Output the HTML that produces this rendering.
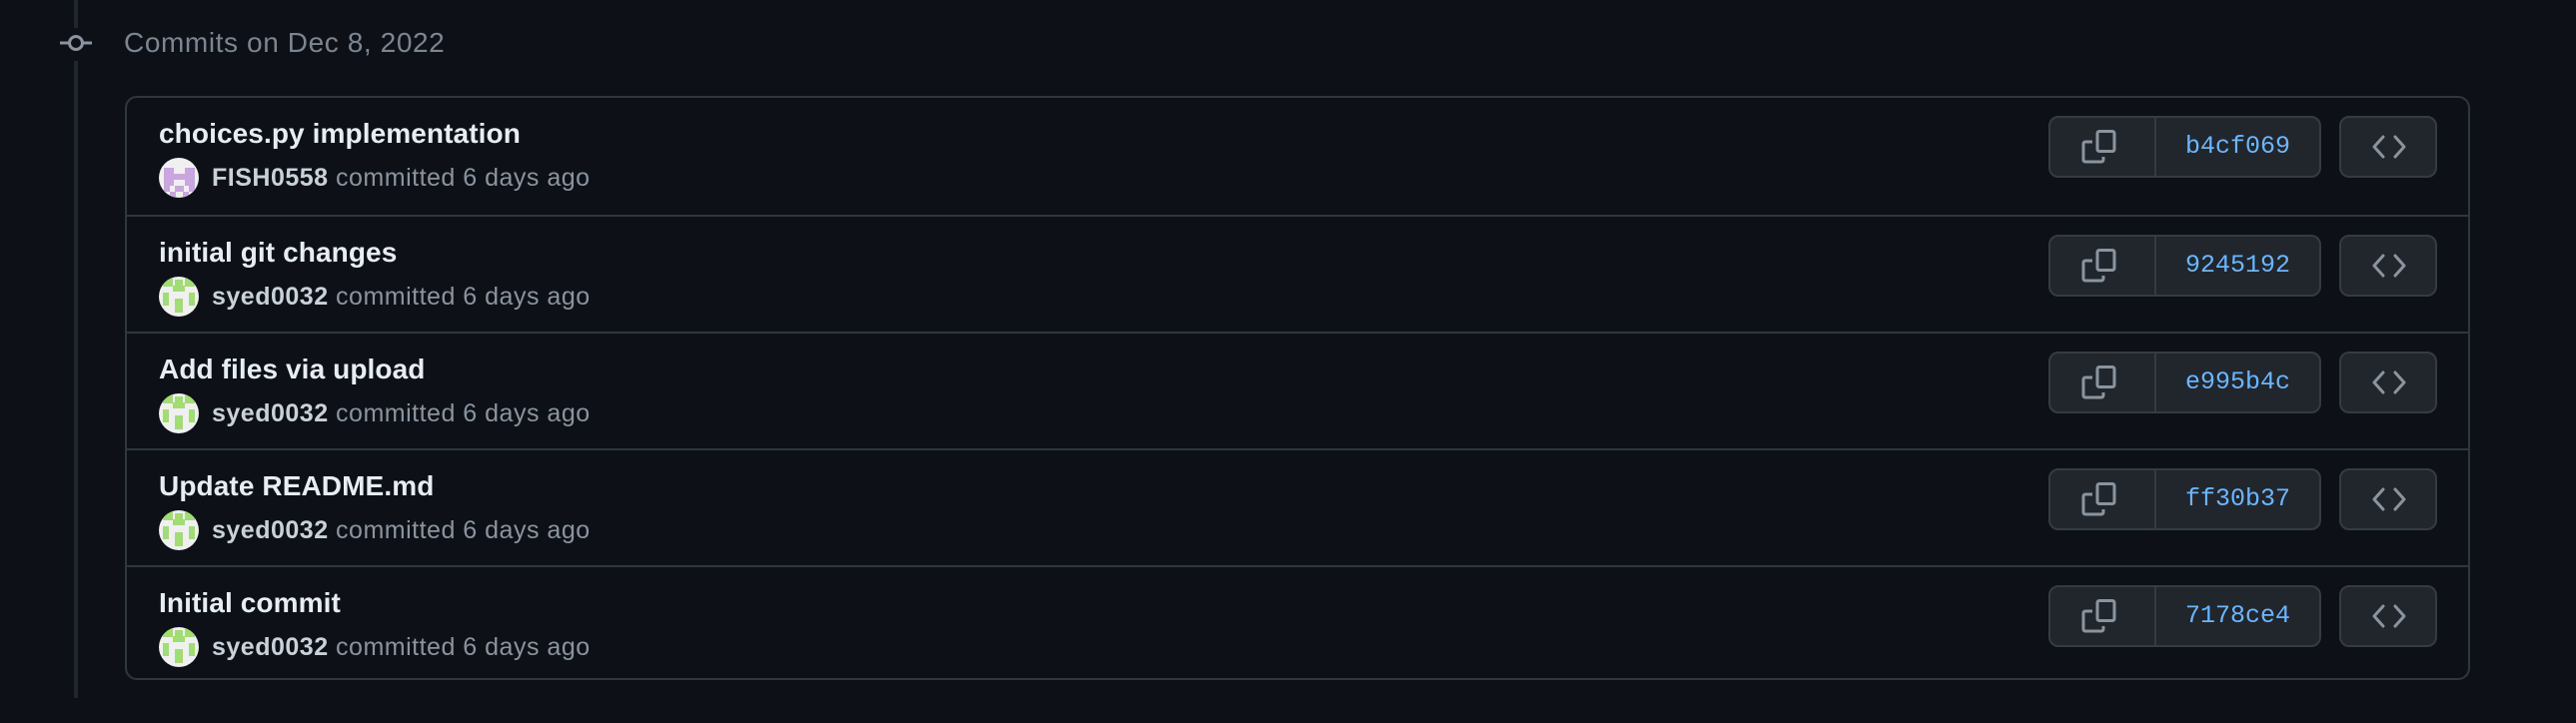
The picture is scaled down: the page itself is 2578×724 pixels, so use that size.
<!DOCTYPE html>
<html><head><meta charset="utf-8"><style>
html,body{margin:0;padding:0;background:#0d1117;width:2578px;height:724px;overflow:hidden;font-family:"Liberation Sans",sans-serif;}
.tl{position:absolute;left:74px;width:4px;background:#21262d;}
.hdr{position:absolute;left:124px;top:24px;font-size:28px;letter-spacing:0.6px;color:#7d8590;line-height:38px;}
.box{position:absolute;left:125px;top:96px;width:2347px;height:585px;border:2px solid #30363d;border-radius:12px;box-sizing:border-box;}
.row{position:absolute;left:0;width:100%;height:117px;border-top:2px solid #30363d;box-sizing:border-box;}
.row.first{border-top:none;}
.title{position:absolute;left:32px;top:19px;font-size:28px;font-weight:bold;color:#e6edf3;line-height:34px;letter-spacing:0.1px;}
.av{position:absolute;left:32px;top:60px;width:40px;height:40px;}
.meta{position:absolute;left:85px;top:64px;font-size:25px;letter-spacing:0.5px;color:#8b949e;line-height:32px;}
.meta b{color:#c9d1d9;}
.grp{position:absolute;left:1923px;top:18px;width:273px;height:62px;border:2px solid #363b42;background:#21262d;border-radius:10px;box-sizing:border-box;}
.grp .div{position:absolute;left:104px;top:0;bottom:0;width:2px;background:#363b42;}
.grp .hash{position:absolute;left:106px;right:0;top:0;bottom:0;text-align:center;line-height:58px;font-family:"Liberation Mono",monospace;font-size:25px;color:#6cb6ff;}
.grp svg{position:absolute;left:30px;top:12px;}
.code{position:absolute;left:2214px;top:18px;width:98px;height:62px;border:2px solid #363b42;background:#21262d;border-radius:10px;box-sizing:border-box;}
.code svg{position:absolute;left:30px;top:16px;}
</style></head><body>
<div class="tl" style="top:0;height:28px"></div>
<div class="tl" style="top:61px;height:638px"></div>
<svg style="position:absolute;left:56px;top:27px" width="40" height="32"><line x1="4" y1="16" x2="13" y2="16" stroke="#8b949e" stroke-width="3"/><line x1="27" y1="16" x2="36" y2="16" stroke="#8b949e" stroke-width="3"/><circle cx="20" cy="16" r="6.5" fill="none" stroke="#8b949e" stroke-width="3"/></svg>
<div class="hdr">Commits on Dec 8, 2022</div>
<div class="box">

<div class="row first" style="top:0">
<div class="title">choices.py implementation</div>
<svg class="av" viewBox="0 0 40 40"><defs><clipPath id="c1"><circle cx="20" cy="20" r="20"/></clipPath></defs><g clip-path="url(#c1)"><rect width="40" height="40" fill="#f0f0f0"/><g fill="#c9a6df"><rect x="5" y="10" width="10" height="6"/><rect x="26" y="10" width="10" height="6"/><rect x="5" y="16" width="31" height="6"/><rect x="5" y="22" width="10" height="6"/><rect x="26" y="22" width="10" height="6"/><rect x="5" y="28" width="6" height="6"/><rect x="16" y="28" width="9" height="6"/><rect x="30" y="28" width="6" height="6"/><rect x="11" y="34" width="6" height="6"/><rect x="24" y="34" width="6" height="6"/></g></g></svg>
<div class="meta"><b>FISH0558</b> committed 6 days ago</div>
<div class="grp"><svg width="36" height="36" viewBox="0 0 36 36"><path d="M19 1.5h13a2 2 0 0 1 2 2v16a2 2 0 0 1-2 2H19a2 2 0 0 1-2-2v-16a2 2 0 0 1 2-2z" fill="none" stroke="#8b949e" stroke-width="3"/><path d="M12 12H5a2 2 0 0 0-2 2v16a2 2 0 0 0 2 2h16a2 2 0 0 0 2-2v-3" fill="none" stroke="#8b949e" stroke-width="3"/></svg><div class="div"></div><div class="hash">b4cf069</div></div>
<div class="code"><svg width="36" height="26" viewBox="0 0 36 26"><path d="M12 3L3 13l9 10M24 3l9 10-9 10" fill="none" stroke="#8b949e" stroke-width="3" stroke-linecap="round" stroke-linejoin="round"/></svg></div>
</div>

<div class="row" style="top:117px">
<div class="title">initial git changes</div>
<svg class="av" viewBox="0 0 40 40"><use href="#g"/></svg>
<div class="meta"><b>syed0032</b> committed 6 days ago</div>
<div class="grp"><svg width="36" height="36" viewBox="0 0 36 36"><path d="M19 1.5h13a2 2 0 0 1 2 2v16a2 2 0 0 1-2 2H19a2 2 0 0 1-2-2v-16a2 2 0 0 1 2-2z" fill="none" stroke="#8b949e" stroke-width="3"/><path d="M12 12H5a2 2 0 0 0-2 2v16a2 2 0 0 0 2 2h16a2 2 0 0 0 2-2v-3" fill="none" stroke="#8b949e" stroke-width="3"/></svg><div class="div"></div><div class="hash">9245192</div></div>
<div class="code"><svg width="36" height="26" viewBox="0 0 36 26"><path d="M12 3L3 13l9 10M24 3l9 10-9 10" fill="none" stroke="#8b949e" stroke-width="3" stroke-linecap="round" stroke-linejoin="round"/></svg></div>
</div>

<div class="row" style="top:234px">
<div class="title">Add files via upload</div>
<svg class="av" viewBox="0 0 40 40"><use href="#g"/></svg>
<div class="meta"><b>syed0032</b> committed 6 days ago</div>
<div class="grp"><svg width="36" height="36" viewBox="0 0 36 36"><path d="M19 1.5h13a2 2 0 0 1 2 2v16a2 2 0 0 1-2 2H19a2 2 0 0 1-2-2v-16a2 2 0 0 1 2-2z" fill="none" stroke="#8b949e" stroke-width="3"/><path d="M12 12H5a2 2 0 0 0-2 2v16a2 2 0 0 0 2 2h16a2 2 0 0 0 2-2v-3" fill="none" stroke="#8b949e" stroke-width="3"/></svg><div class="div"></div><div class="hash">e995b4c</div></div>
<div class="code"><svg width="36" height="26" viewBox="0 0 36 26"><path d="M12 3L3 13l9 10M24 3l9 10-9 10" fill="none" stroke="#8b949e" stroke-width="3" stroke-linecap="round" stroke-linejoin="round"/></svg></div>
</div>

<div class="row" style="top:351px">
<div class="title">Update README.md</div>
<svg class="av" viewBox="0 0 40 40"><use href="#g"/></svg>
<div class="meta"><b>syed0032</b> committed 6 days ago</div>
<div class="grp"><svg width="36" height="36" viewBox="0 0 36 36"><path d="M19 1.5h13a2 2 0 0 1 2 2v16a2 2 0 0 1-2 2H19a2 2 0 0 1-2-2v-16a2 2 0 0 1 2-2z" fill="none" stroke="#8b949e" stroke-width="3"/><path d="M12 12H5a2 2 0 0 0-2 2v16a2 2 0 0 0 2 2h16a2 2 0 0 0 2-2v-3" fill="none" stroke="#8b949e" stroke-width="3"/></svg><div class="div"></div><div class="hash">ff30b37</div></div>
<div class="code"><svg width="36" height="26" viewBox="0 0 36 26"><path d="M12 3L3 13l9 10M24 3l9 10-9 10" fill="none" stroke="#8b949e" stroke-width="3" stroke-linecap="round" stroke-linejoin="round"/></svg></div>
</div>

<div class="row" style="top:468px">
<div class="title">Initial commit</div>
<svg class="av" viewBox="0 0 40 40"><use href="#g"/></svg>
<div class="meta"><b>syed0032</b> committed 6 days ago</div>
<div class="grp"><svg width="36" height="36" viewBox="0 0 36 36"><path d="M19 1.5h13a2 2 0 0 1 2 2v16a2 2 0 0 1-2 2H19a2 2 0 0 1-2-2v-16a2 2 0 0 1 2-2z" fill="none" stroke="#8b949e" stroke-width="3"/><path d="M12 12H5a2 2 0 0 0-2 2v16a2 2 0 0 0 2 2h16a2 2 0 0 0 2-2v-3" fill="none" stroke="#8b949e" stroke-width="3"/></svg><div class="div"></div><div class="hash">7178ce4</div></div>
<div class="code"><svg width="36" height="26" viewBox="0 0 36 26"><path d="M12 3L3 13l9 10M24 3l9 10-9 10" fill="none" stroke="#8b949e" stroke-width="3" stroke-linecap="round" stroke-linejoin="round"/></svg></div>
</div>

</div>
<svg width="0" height="0" style="position:absolute"><defs><clipPath id="c2"><circle cx="20" cy="20" r="20"/></clipPath><g id="g" clip-path="url(#c2)"><rect width="40" height="40" fill="#f0f0f0"/><g fill="#a2dc74"><rect x="4" y="0" width="10" height="10"/><rect x="26" y="0" width="10" height="10"/><rect x="16" y="3" width="8" height="6"/><rect x="14" y="9" width="12" height="6"/><rect x="4" y="16" width="6" height="13"/><rect x="30" y="16" width="6" height="13"/><rect x="16" y="22" width="8" height="14"/></g></g></defs></svg>
</body></html>
